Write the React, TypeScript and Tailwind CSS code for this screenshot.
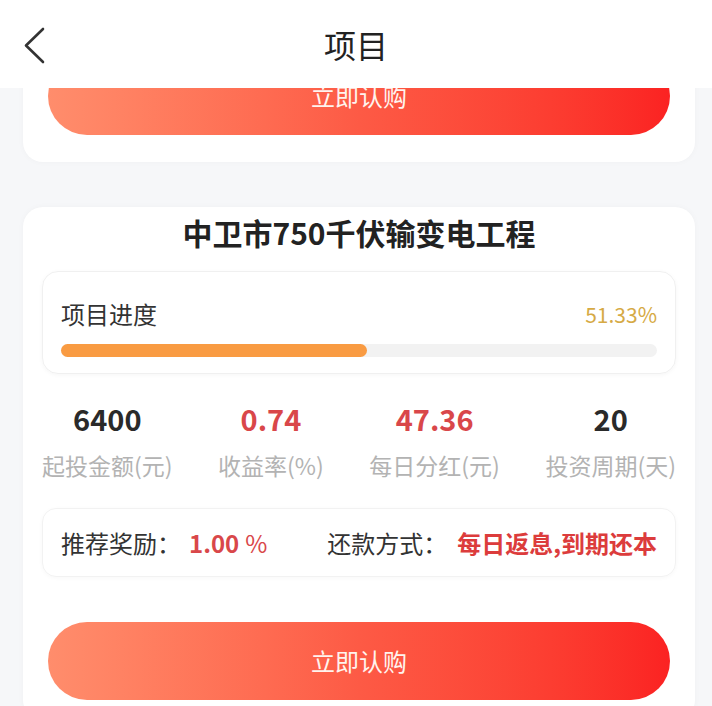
import React from "react";

const font = { fontFamily: '"Noto Sans CJK SC", "Noto Sans", sans-serif' };

const stats = [
  { value: "6400", label: "起投金额(元)", red: false },
  { value: "0.74", label: "收益率(%)", red: true },
  { value: "47.36", label: "每日分红(元)", red: true },
  { value: "20", label: "投资周期(天)", red: false },
];

function BuyButton() {
  return (
    <div className="mx-[6px] flex h-[78px] items-center justify-center rounded-full bg-gradient-to-r from-[#ff8d6c] via-[#fd5a45] to-[#fb2222] text-[24px] text-[#fff3ee]">
      立即认购
    </div>
  );
}

export default function App() {
  return (
    <div style={font} className="flex h-[706px] w-[712px] flex-col overflow-hidden bg-[#f6f7f9]">
      {/* header */}
      <div className="relative z-10 flex h-[88px] shrink-0 items-center justify-center bg-white">
        <svg className="absolute left-[22px] top-[26px]" width="26" height="40" viewBox="0 0 26 40" fill="none">
          <path d="M21 3 L4 19.5 L21 36" stroke="#333" strokeWidth="2.6" strokeLinecap="round" strokeLinejoin="round" />
        </svg>
        <span className="text-[32px] leading-[40px] text-[#222]">项目</span>
      </div>

      <div className="flex flex-col pl-[23px] pr-[17px]">
        {/* previous card, scrolled under header */}
        <div className="-mt-[51px] rounded-[20px] bg-white px-[19px] pb-[27px] pt-[20px] shadow-[0_0_6px_rgba(0,0,0,0.03)]">
          <BuyButton />
        </div>

        {/* project card */}
        <div className="mt-[45px] flex flex-col rounded-[20px] bg-white px-[19px] pt-[6px] pb-[20px] shadow-[0_0_6px_rgba(0,0,0,0.03)]">
          <h1 className="text-center text-[30px] font-bold leading-[38px] text-[#222]">中卫市750千伏输变电工程</h1>

          <div className="mt-[20px] rounded-[16px] border border-[#f0f0f0] px-[18px] pb-[16px] pt-[27px] shadow-[0_1px_4px_rgba(0,0,0,0.04)]">
            <div className="flex items-center justify-between">
              <span className="text-[24px] leading-[30px] text-[#333]">项目进度</span>
              <span className="text-[21px] leading-[30px] text-[#d6aa45]">51.33%</span>
            </div>
            <div className="mt-[15px] h-[13px] w-full rounded-full bg-[#f2f2f2]">
              <div className="h-full w-[51.33%] rounded-full bg-[#f99b42]" />
            </div>
          </div>

          <div className="mt-[26px] flex justify-between">
            {stats.map((s) => (
              <div key={s.label} className="flex flex-col items-center">
                <span className={`text-[29px] font-bold leading-[36px] ${s.red ? "text-[#d9474a]" : "text-[#2a2a2a]"}`}>{s.value}</span>
                <span className="mt-[15px] text-[23px] leading-[28px] text-[#b3b3b3]">{s.label}</span>
              </div>
            ))}
          </div>

          <div className="mt-[29px] flex h-[69px] items-center justify-between rounded-[14px] border border-[#f2f2f2] px-[18px] text-[24px] shadow-[0_1px_4px_rgba(0,0,0,0.03)]">
            <div className="flex items-center">
              <span className="text-[#333]">推荐奖励：</span>
              <span className="ml-[8px] font-bold text-[#d9474a]">1.00</span>
              <span className="ml-[6px] text-[#d9474a]">%</span>
            </div>
            <div className="flex items-center">
              <span className="mr-[10px] text-[#333]">还款方式：</span>
              <span className="font-bold text-[#dc3c3c]">每日返息,到期还本</span>
            </div>
          </div>

          <div className="mt-[45px]">
            <BuyButton />
          </div>
        </div>
      </div>
    </div>
  );
}
